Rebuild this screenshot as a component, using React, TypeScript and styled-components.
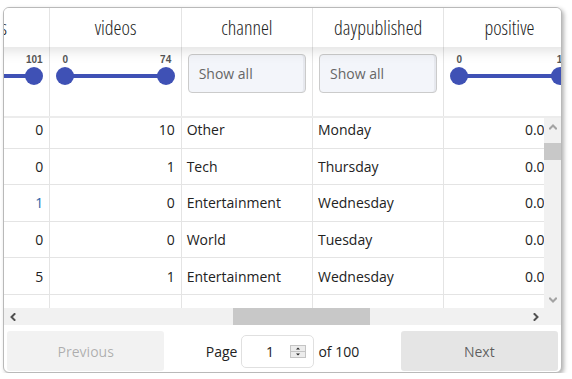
import React, { useLayoutEffect, useRef } from 'react';
import styled, { createGlobalStyle } from 'styled-components';

const COL_W = 131.33;
const SCROLL_X = 85;
const SCROLL_Y = 6;
const LINE = '#e4e4e4';

const Global = createGlobalStyle`
  html, body { margin: 0; padding: 0; background: #fff; }
  body { font-family: "Open Sans", "Liberation Sans", sans-serif; font-size: 14px; color: #222; }
`;

const Page = styled.div`
  padding: 7px 0 0 3px;
`;

const Frame = styled.div`
  box-sizing: border-box;
  width: 559px;
  height: 366px;
  border: 1px solid #b9b9b9;
  border-radius: 6px;
  box-shadow: 2px 2px 4px rgba(0, 0, 0, 0.3);
  overflow: hidden;
  display: flex;
  flex-direction: column;
  background: #fff;
`;

const HeadViewport = styled.div`
  flex: none;
  overflow: hidden;
`;

const GridRow = styled.div`
  display: grid;
  grid-template-columns: repeat(5, ${COL_W}px);
  width: max-content;
`;

const HeaderRow = styled(GridRow)`
  position: relative;
  z-index: 1;
  height: 39px;
  background: #fff;
  box-shadow: 0 2px 15px 0 rgba(0, 0, 0, 0.15);
`;

const HeaderCell = styled.div`
  box-sizing: border-box;
  border-right: 1px solid ${LINE};
  display: flex;
  align-items: center;
  justify-content: center;
  font-family: "Open Sans", sans-serif;
  font-weight: 300;
  font-stretch: 75%;
  font-size: 20px;
  color: #1d1d1d;
  padding-bottom: 1px;
`;

const FilterRow = styled(GridRow)`
  height: 71px;
  box-sizing: border-box;
  border-bottom: 2px solid #ececec;
  background: #fff;
`;

const FilterCell = styled.div`
  box-sizing: border-box;
  border-right: 1px solid ${LINE};
  padding: 7px 6px 0 6px;
`;

const SelectBox = styled.div`
  box-sizing: border-box;
  height: 39px;
  border: 1px solid #cbcbcb;
  border-radius: 4px;
  background: #f3f5fa;
  box-shadow: inset -2px 0 0 #e6e8ee;
  display: flex;
  align-items: center;
  padding-left: 10px;
  color: #666;
  font-size: 14px;
`;

const SliderBox = styled.div`
  box-sizing: border-box;
  border-right: 1px solid ${LINE};
  padding: 7px 15px 0 15px;
`;

const LabelRow = styled.div`
  position: relative;
  height: 13px;
  font-family: "Liberation Sans", Arial, sans-serif;
  font-weight: bold;
  font-size: 10px;
  line-height: 12px;
  color: #555;
`;

const Label = styled.span<{ $at: number }>`
  position: absolute;
  top: 0;
  left: ${(p) => p.$at}%;
  transform: translateX(-50%);
  white-space: nowrap;
`;

const TrackArea = styled.div`
  position: relative;
  height: 18px;
  display: flex;
  align-items: center;
`;

const Track = styled.div`
  flex: 1;
  height: 4px;
  background: #3f51b5;
`;

const Thumb = styled.div<{ $at: number }>`
  position: absolute;
  top: 0;
  left: ${(p) => p.$at}%;
  width: 18px;
  height: 18px;
  border-radius: 50%;
  background: #3f51b5;
  transform: translateX(-50%);
`;

const BodyArea = styled.div`
  flex: none;
  height: 190px;
  display: flex;
`;

const BodyViewport = styled.div`
  flex: 1;
  overflow: hidden;
`;

const BodyRow = styled(GridRow)`
  height: 36.6px;
  box-sizing: border-box;
  border-bottom: 1px solid ${LINE};
`;

const Cell = styled.div<{ $num?: boolean; $accent?: boolean }>`
  box-sizing: border-box;
  border-right: 1px solid ${LINE};
  display: flex;
  align-items: center;
  justify-content: ${(p) => (p.$num ? 'flex-end' : 'flex-start')};
  padding: 0 6px 0 5px;
  font-size: 14px;
  color: ${(p) => (p.$accent ? '#2f66a8' : '#222')};
  white-space: nowrap;
  overflow: hidden;
`;

const VScroll = styled.div`
  flex: none;
  width: 17px;
  background: #f1f1f1;
  display: flex;
  flex-direction: column;
`;

const HScroll = styled.div`
  flex: none;
  height: 17px;
  background: #f1f1f1;
  display: flex;
`;

const ArrowBtn = styled.div`
  flex: none;
  width: 17px;
  height: 17px;
  display: flex;
  align-items: center;
  justify-content: center;
`;

const VTrack = styled.div`
  flex: 1;
  display: flex;
  flex-direction: column;
`;

const HTrack = styled.div`
  flex: 1;
  display: flex;
`;

const VThumb = styled.div`
  width: 17px;
  height: 17px;
  background: #c8c8c8;
`;

const HThumb = styled.div`
  height: 17px;
  background: #c8c8c8;
`;

const Corner = styled.div`
  flex: none;
  width: 17px;
`;

const Pagination = styled.div`
  flex: none;
  height: 47px;
  box-sizing: border-box;
  padding: 6px 3px 1px;
  display: flex;
`;

const PageBtn = styled.button<{ $disabled?: boolean }>`
  flex: 1;
  border: 0;
  border-radius: 3px;
  font-family: "Open Sans", sans-serif;
  font-size: 14px;
  background: rgba(0, 0, 0, 0.1);
  color: rgba(0, 0, 0, 0.6);
  opacity: ${(p) => (p.$disabled ? 0.5 : 1)};
  padding: 0;
`;

const Center = styled.div`
  flex: 1.5;
  display: flex;
  align-items: center;
  justify-content: center;
  gap: 4px;
  font-size: 14px;
  color: #222;
`;

const PageInput = styled.div`
  box-sizing: border-box;
  width: 73px;
  height: 33px;
  border: 1px solid #e0e0e0;
  border-radius: 5px;
  display: flex;
  align-items: center;
  padding: 0 7px 0 7px;
`;

const PageValue = styled.span`
  flex: 1;
  text-align: center;
`;

function Chevron({ dir, color }: { dir: 'up' | 'down' | 'left' | 'right'; color: string }) {
  const pts: Record<string, string> = {
    up: '1,5.5 4,2.5 7,5.5',
    down: '1,2.5 4,5.5 7,2.5',
    left: '5.5,1 2.5,4 5.5,7',
    right: '2.5,1 5.5,4 2.5,7',
  };
  return (
    <svg width="8" height="8" viewBox="0 0 8 8">
      <polyline points={pts[dir]} fill="none" stroke={color} strokeWidth="2" strokeLinecap="square" />
    </svg>
  );
}

function Spinner() {
  return (
    <svg width="16" height="13" viewBox="0 0 16 13">
      <rect x="0.5" y="0.5" width="15" height="12" fill="#ececec" stroke="#c4c4c4" />
      <line x1="1" y1="6.5" x2="15" y2="6.5" stroke="#c4c4c4" />
      <polygon points="6,4.5 10,4.5 8,2.5" fill="#222" />
      <polygon points="6,8.5 10,8.5 8,10.5" fill="#222" />
    </svg>
  );
}

function RangeSlider({ min, max }: { min: number; max: number }) {
  return (
    <SliderBox>
      <LabelRow>
        <Label $at={0}>{min}</Label>
        <Label $at={100}>{max}</Label>
      </LabelRow>
      <TrackArea>
        <Track />
        <Thumb $at={0} />
        <Thumb $at={100} />
      </TrackArea>
    </SliderBox>
  );
}

function useScrolled(x: number, y: number) {
  const ref = useRef<HTMLDivElement>(null);
  useLayoutEffect(() => {
    if (ref.current) {
      ref.current.scrollLeft = x;
      ref.current.scrollTop = y;
    }
  }, [x, y]);
  return ref;
}

const columns = ['images', 'videos', 'channel', 'daypublished', 'positive'];

const rows = [
  { images: '0', videos: '10', channel: 'Other', day: 'Monday', positive: '0.0414' },
  { images: '0', videos: '1', channel: 'Tech', day: 'Thursday', positive: '0.0316' },
  { images: '1', videos: '0', channel: 'Entertainment', day: 'Wednesday', positive: '0.0435', accent: true },
  { images: '0', videos: '0', channel: 'World', day: 'Tuesday', positive: '0.0281' },
  { images: '5', videos: '1', channel: 'Entertainment', day: 'Wednesday', positive: '0.0512' },
  { images: '', videos: '', channel: '', day: '', positive: '' },
];

export default function App() {
  const headRef = useScrolled(SCROLL_X, 0);
  const bodyRef = useScrolled(SCROLL_X, SCROLL_Y);
  return (
    <Page>
      <Global />
      <Frame>
        <HeadViewport ref={headRef}>
          <HeaderRow>
            {columns.map((c) => (
              <HeaderCell key={c}>{c}</HeaderCell>
            ))}
          </HeaderRow>
          <FilterRow>
            <RangeSlider min={0} max={101} />
            <RangeSlider min={0} max={74} />
            <FilterCell>
              <SelectBox>Show all</SelectBox>
            </FilterCell>
            <FilterCell>
              <SelectBox>Show all</SelectBox>
            </FilterCell>
            <RangeSlider min={0} max={1} />
          </FilterRow>
        </HeadViewport>
        <BodyArea>
          <BodyViewport ref={bodyRef}>
            {rows.map((r, i) => (
              <BodyRow key={i}>
                <Cell $num $accent={r.accent}>{r.images}</Cell>
                <Cell $num>{r.videos}</Cell>
                <Cell>{r.channel}</Cell>
                <Cell>{r.day}</Cell>
                <Cell $num>{r.positive}</Cell>
              </BodyRow>
            ))}
          </BodyViewport>
          <VScroll>
            <ArrowBtn>
              <Chevron dir="up" color="#a3a3a3" />
            </ArrowBtn>
            <VTrack>
              <div style={{ height: 8 }} />
              <VThumb />
            </VTrack>
            <ArrowBtn>
              <Chevron dir="down" color="#a3a3a3" />
            </ArrowBtn>
          </VScroll>
        </BodyArea>
        <HScroll>
          <ArrowBtn>
            <Chevron dir="left" color="#505050" />
          </ArrowBtn>
          <HTrack>
            <HThumb style={{ marginLeft: 212, width: 137 }} />
          </HTrack>
          <ArrowBtn>
            <Chevron dir="right" color="#505050" />
          </ArrowBtn>
          <Corner />
        </HScroll>
        <Pagination>
          <PageBtn $disabled>Previous</PageBtn>
          <Center>
            <span>Page</span>
            <PageInput>
              <PageValue>1</PageValue>
              <Spinner />
            </PageInput>
            <span>of 100</span>
          </Center>
          <PageBtn>Next</PageBtn>
        </Pagination>
      </Frame>
    </Page>
  );
}
